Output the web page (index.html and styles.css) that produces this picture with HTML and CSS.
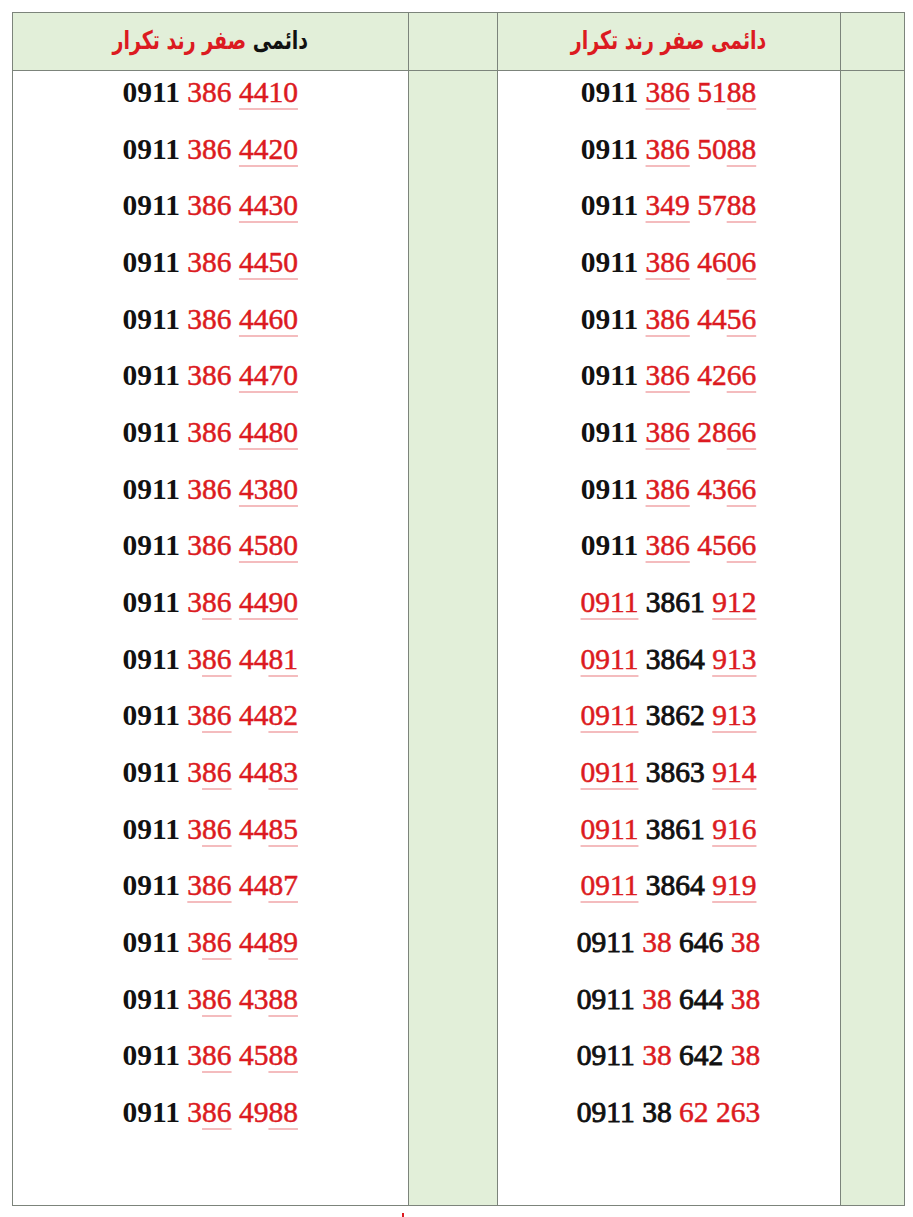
FILE: index.html
```html
<!DOCTYPE html>
<html lang="fa">
<head>
<meta charset="utf-8">
<title>دائمی صفر رند تکرار</title>
<link rel="stylesheet" href="styles.css">
</head>
<body>
<div class="sheet">
  <div class="cell head"><span class="title" dir="rtl"><span class="blk">دائمی</span> <span class="red">صفر رند تکرار</span></span></div>
  <div class="cell head"></div>
  <div class="cell head"><span class="title red" dir="rtl">دائمی صفر رند تکرار</span></div>
  <div class="cell head last"></div>

  <div class="cell body">
    <div class="n"><span class="k">0911</span> <span class="r">386</span> <span class="r u">4410</span></div>
    <div class="n"><span class="k">0911</span> <span class="r">386</span> <span class="r u">4420</span></div>
    <div class="n"><span class="k">0911</span> <span class="r">386</span> <span class="r u">4430</span></div>
    <div class="n"><span class="k">0911</span> <span class="r">386</span> <span class="r u">4450</span></div>
    <div class="n"><span class="k">0911</span> <span class="r">386</span> <span class="r u">4460</span></div>
    <div class="n"><span class="k">0911</span> <span class="r">386</span> <span class="r u">4470</span></div>
    <div class="n"><span class="k">0911</span> <span class="r">386</span> <span class="r u">4480</span></div>
    <div class="n"><span class="k">0911</span> <span class="r">386</span> <span class="r u">4380</span></div>
    <div class="n"><span class="k">0911</span> <span class="r">386</span> <span class="r u">4580</span></div>
    <div class="n"><span class="k">0911</span> <span class="r">3<span class="u">86</span></span> <span class="r u">4490</span></div>
    <div class="n"><span class="k">0911</span> <span class="r">3<span class="u">86</span></span> <span class="r">44<span class="u">81</span></span></div>
    <div class="n"><span class="k">0911</span> <span class="r">3<span class="u">86</span></span> <span class="r">44<span class="u">82</span></span></div>
    <div class="n"><span class="k">0911</span> <span class="r">3<span class="u">86</span></span> <span class="r">44<span class="u">83</span></span></div>
    <div class="n"><span class="k">0911</span> <span class="r">3<span class="u">86</span></span> <span class="r">44<span class="u">85</span></span></div>
    <div class="n"><span class="k">0911</span> <span class="r"><span class="u">386</span></span> <span class="r">44<span class="u">87</span></span></div>
    <div class="n"><span class="k">0911</span> <span class="r">3<span class="u">86</span></span> <span class="r">44<span class="u">89</span></span></div>
    <div class="n"><span class="k">0911</span> <span class="r">3<span class="u">86</span></span> <span class="r">43<span class="u">88</span></span></div>
    <div class="n"><span class="k">0911</span> <span class="r">3<span class="u">86</span></span> <span class="r">45<span class="u">88</span></span></div>
    <div class="n"><span class="k">0911</span> <span class="r">3<span class="u">86</span></span> <span class="r">49<span class="u">88</span></span></div>
  </div>
  <div class="cell body green"></div>
  <div class="cell body">
    <div class="n"><span class="k">0911</span> <span class="r u">386</span> <span class="r">51<span class="u">88</span></span></div>
    <div class="n"><span class="k">0911</span> <span class="r u">386</span> <span class="r">50<span class="u">88</span></span></div>
    <div class="n"><span class="k">0911</span> <span class="r u">349</span> <span class="r">57<span class="u">88</span></span></div>
    <div class="n"><span class="k">0911</span> <span class="r u">386</span> <span class="r">46<span class="u">06</span></span></div>
    <div class="n"><span class="k">0911</span> <span class="r u">386</span> <span class="r">44<span class="u">56</span></span></div>
    <div class="n"><span class="k">0911</span> <span class="r u">386</span> <span class="r">42<span class="u">66</span></span></div>
    <div class="n"><span class="k">0911</span> <span class="r u">386</span> <span class="r">28<span class="u">66</span></span></div>
    <div class="n"><span class="k">0911</span> <span class="r u">386</span> <span class="r">43<span class="u">66</span></span></div>
    <div class="n"><span class="k">0911</span> <span class="r u">386</span> <span class="r">45<span class="u">66</span></span></div>
    <div class="n"><span class="r u">0911</span> <span class="k2">3861</span> <span class="r u">912</span></div>
    <div class="n"><span class="r u">0911</span> <span class="k2">3864</span> <span class="r u">913</span></div>
    <div class="n"><span class="r u">0911</span> <span class="k2">3862</span> <span class="r u">913</span></div>
    <div class="n"><span class="r u">0911</span> <span class="k2">3863</span> <span class="r u">914</span></div>
    <div class="n"><span class="r u">0911</span> <span class="k2">3861</span> <span class="r u">916</span></div>
    <div class="n"><span class="r u">0911</span> <span class="k2">3864</span> <span class="r u">919</span></div>
    <div class="n"><span class="k2">0911</span> <span class="r">38</span> <span class="k2">646</span> <span class="r">38</span></div>
    <div class="n"><span class="k2">0911</span> <span class="r">38</span> <span class="k2">644</span> <span class="r">38</span></div>
    <div class="n"><span class="k2">0911</span> <span class="r">38</span> <span class="k2">642</span> <span class="r">38</span></div>
    <div class="n"><span class="k2">0911</span> <span class="k2">38</span> <span class="r">62 263</span></div>
  </div>
  <div class="cell body green last"></div>
</div>
<div class="mark"></div>
</body>
</html>
```

FILE: styles.css
```css
html, body {
  margin: 0;
  padding: 0;
  background: #ffffff;
}

body {
  font-family: "Liberation Serif", "Times New Roman", serif;
  color: #111111;
}

.sheet {
  margin: 12px 0 0 12px;
  width: 893px;
  box-sizing: border-box;
  display: grid;
  grid-template-columns: 395.5px 89px 343px 64px;
  grid-template-rows: 58px 1135px;
  border-left: 1.5px solid #7c847b;
  border-top: 1.5px solid #7c847b;
}

.cell {
  box-sizing: border-box;
  border-right: 1.5px solid #7c847b;
  border-bottom: 1.5px solid #7c847b;
}

.head {
  background: #e2efd9;
  display: flex;
  align-items: center;
  justify-content: center;
}

.title {
  font-family: "DejaVu Sans", sans-serif;
  font-weight: bold;
  font-size: 19px;
  line-height: 1;
  padding-bottom: 3px;
  transform: scaleY(1.35);
}

.blk {
  color: #111111;
}

.red {
  color: #dc1a21;
}

.green {
  background: #e2efd9;
}

.body {
  display: flex;
  flex-direction: column;
  align-items: center;
}

.n {
  box-sizing: border-box;
  height: 56.67px;
  padding-top: 7px;
  font-size: 29.5px;
  line-height: 29px;
  white-space: nowrap;
}

.k {
  color: #111111;
  font-weight: bold;
}

.k2 {
  color: #111111;
  -webkit-text-stroke: 0.9px #111111;
}

.r {
  color: #dc1a21;
  -webkit-text-stroke: 0.5px #dc1a21;
}

.u {
  text-decoration: underline;
  text-decoration-color: #f4bcbe;
  text-decoration-thickness: 1.5px;
  text-underline-offset: 6px;
}

.mark {
  margin: 7px 0 0 402px;
  width: 2px;
  height: 6px;
  background: #dc1a21;
}
```
